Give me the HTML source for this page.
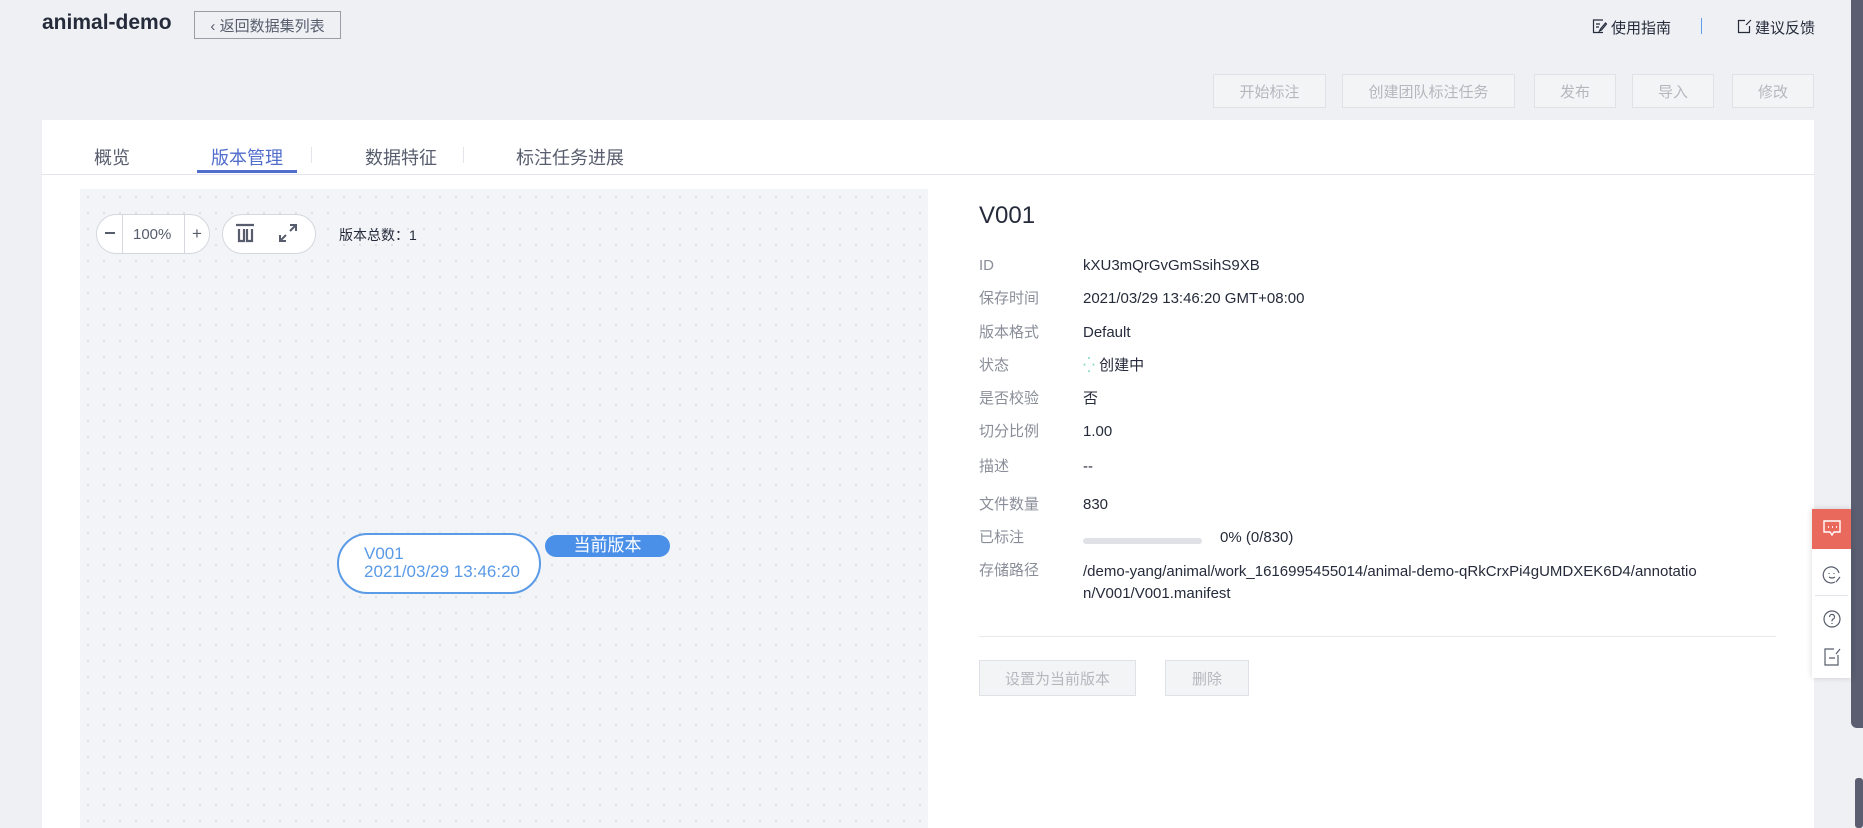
<!DOCTYPE html>
<html><head><meta charset="utf-8"><style>
*{margin:0;padding:0;box-sizing:border-box}
body{width:1863px;height:828px;overflow:hidden;background:#eef0f4;font-family:"Liberation Sans","Noto Sans CJK SC",sans-serif;color:#252b3a;position:relative}
.a{position:absolute;white-space:nowrap}
.btn{position:absolute;height:34px;border:1px solid #dfe1e6;background:#f3f4f6;color:#b4b7be;font-size:15px;display:flex;align-items:center;justify-content:center}
.lab{position:absolute;left:979px;color:#8a8e99;font-size:15px;line-height:20px}
.val{position:absolute;left:1083px;color:#252b3a;font-size:15px;line-height:20px}
</style></head><body>
<div class="a" style="left:42px;top:11px;font-size:21px;font-weight:bold;color:#252b3a">animal-demo</div>
<div class="a" style="left:194px;top:11px;width:147px;height:28px;border:1px solid #9a9da5;font-size:15px;color:#575d6c;display:flex;align-items:center;justify-content:center">‹ 返回数据集列表</div>
<svg class="a" style="left:1592px;top:19px" width="15" height="15" viewBox="0 0 15 15" fill="none" stroke="#252b3a" stroke-width="1.2"><path d="M11 1H1.5v12.5H11M4 5h4M4 8h3M13.5 4l-5 6-1 2 2-1 5-6z"/></svg>
<div class="a" style="left:1611px;top:17px;font-size:15px;color:#252b3a">使用指南</div>
<div class="a" style="left:1701px;top:18px;width:1px;height:16px;background:#5e9cf0"></div>
<svg class="a" style="left:1737px;top:19px" width="15" height="15" viewBox="0 0 15 15" fill="none" stroke="#252b3a" stroke-width="1.2"><path d="M8 1.5H1.5v12h11V7M9 6l5-5"/></svg>
<div class="a" style="left:1755px;top:17px;font-size:15px;color:#252b3a">建议反馈</div>
<div class="btn" style="left:1213px;top:74px;width:113px">开始标注</div>
<div class="btn" style="left:1342px;top:74px;width:173px">创建团队标注任务</div>
<div class="btn" style="left:1534px;top:74px;width:82px">发布</div>
<div class="btn" style="left:1632px;top:74px;width:82px">导入</div>
<div class="btn" style="left:1732px;top:74px;width:82px">修改</div>
<div class="a" style="left:1851px;top:0;width:12px;height:728px;background:#5a5e70;border-radius:0 0 0 6px"></div>
<div class="a" style="left:42px;top:120px;width:1772px;height:708px;background:#fff"></div>
<div class="a" style="left:42px;top:174px;width:1772px;height:1px;background:#e3e5ea"></div>
<div class="a" style="left:94px;top:144px;font-size:18px;color:#575d6c">概览</div>
<div class="a" style="left:211px;top:144px;font-size:18px;color:#526ecc">版本管理</div>
<div class="a" style="left:197px;top:170px;width:100px;height:3px;background:#526ecc"></div>
<div class="a" style="left:311px;top:147px;width:1px;height:16px;background:#e3e5ea"></div>
<div class="a" style="left:365px;top:144px;font-size:18px;color:#575d6c">数据特征</div>
<div class="a" style="left:463px;top:147px;width:1px;height:16px;background:#e3e5ea"></div>
<div class="a" style="left:516px;top:144px;font-size:18px;color:#575d6c">标注任务进展</div>
<div class="a" style="left:80px;top:189px;width:848px;height:639px;background-color:#f3f4f8;background-image:radial-gradient(#dcdee5 1px,transparent 1.2px);background-size:16px 16px"></div>
<div class="a" style="left:96px;top:214px;width:114px;height:40px;border:1px solid #d4d7de;border-radius:20px;background:#fff;font-size:15px;color:#575d6c"><span class="a" style="left:8px;top:17px;width:10px;height:2px;background:#575d6c"></span><span class="a" style="left:25px;top:0;width:1px;height:38px;background:#d4d7de"></span><span class="a" style="left:36px;top:11px">100%</span><span class="a" style="left:87px;top:0;width:1px;height:38px;background:#d4d7de"></span><span class="a" style="left:95px;top:9px;font-size:17px">+</span></div>
<div class="a" style="left:222px;top:214px;width:94px;height:40px;border:1px solid #d4d7de;border-radius:20px;background:#fff"></div>
<svg class="a" style="left:235px;top:223px" width="20" height="20" viewBox="0 0 20 20" fill="none" stroke="#575d6c" stroke-width="2.2"><path d="M1 2h18M4 6v12h5V6M12 6v12h5V6"/></svg>
<svg class="a" style="left:277px;top:222px" width="22" height="22" viewBox="0 0 22 22" fill="none" stroke="#575d6c" stroke-width="2"><path d="M13 3h6v6M19 3l-6 6M3 13v6h6M3 19l6-6"/></svg>
<div class="a" style="left:339px;top:225px;font-size:14px;color:#252b3a">版本总数：1</div>
<div class="a" style="left:337px;top:533px;width:204px;height:61px;border:2.5px solid #5a9ae6;border-radius:31px;background:#fff;color:#5a9ae6;font-size:17px;line-height:18px;padding:10px 0 0 25px">V001<br>2021/03/29 13:46:20</div>
<div class="a" style="left:545px;top:535px;width:125px;height:22px;border-radius:11px;background:#4a8fe8;color:#fff;font-size:17px;text-align:center;line-height:22px">当前版本</div>
<div class="a" style="left:979px;top:202px;font-size:24px;color:#252b3a">V001</div>
<div class="lab" style="top:256px">ID</div><div class="val" style="top:256px">kXU3mQrGvGmSsihS9XB</div>
<div class="lab" style="top:289px">保存时间</div><div class="val" style="top:289px">2021/03/29 13:46:20 GMT+08:00</div>
<div class="lab" style="top:323px">版本格式</div><div class="val" style="top:323px">Default</div>
<div class="lab" style="top:356px">状态</div><div class="val" style="top:356px"><span style="color:#7fd6c6">⁛</span> 创建中</div>
<div class="lab" style="top:389px">是否校验</div><div class="val" style="top:389px">否</div>
<div class="lab" style="top:422px">切分比例</div><div class="val" style="top:422px">1.00</div>
<div class="lab" style="top:457px">描述</div><div class="val" style="top:457px">--</div>
<div class="lab" style="top:495px">文件数量</div><div class="val" style="top:495px">830</div>
<div class="lab" style="top:528px">已标注</div>
<div class="a" style="left:1083px;top:538px;width:119px;height:6px;border-radius:3px;background:#dfe1e6"></div>
<div class="val" style="left:1220px;top:528px">0% (0/830)</div>
<div class="lab" style="top:561px">存储路径</div><div class="val" style="top:561px;line-height:22px">/demo-yang/animal/work_1616995455014/animal-demo-qRkCrxPi4gUMDXEK6D4/annotatio<br>n/V001/V001.manifest</div>
<div class="a" style="left:979px;top:636px;width:797px;height:1px;background:#e8e9ed"></div>
<div class="btn" style="left:979px;top:660px;width:157px;height:36px">设置为当前版本</div>
<div class="btn" style="left:1165px;top:660px;width:84px;height:36px">删除</div>
<div class="a" style="left:1812px;top:509px;width:39px;height:169px;background:#fff;box-shadow:0 0 6px rgba(0,0,0,.15)"></div>
<div class="a" style="left:1812px;top:509px;width:39px;height:40px;background:#e9695c"></div>
<svg class="a" style="left:1822px;top:519px" width="20" height="18" viewBox="0 0 20 18" fill="none" stroke="#fff" stroke-width="1.4"><path d="M2 2h16v11h-6l-2 3-2-3H2z"/><path d="M6 8h1M10 8h1M14 8h1" stroke-width="1.8"/></svg>
<svg class="a" style="left:1822px;top:565px" width="20" height="20" viewBox="0 0 20 20" fill="none" stroke="#575d6c" stroke-width="1.2"><path d="M17 8A8 8 0 1 0 13 17M7 8v1M12 8v1M7 12q3 2 6 0M14 17l4-5"/></svg>
<div class="a" style="left:1815px;top:595px;width:33px;height:1px;background:#e3e5ea"></div>
<svg class="a" style="left:1822px;top:609px" width="20" height="20" viewBox="0 0 20 20" fill="none" stroke="#575d6c" stroke-width="1.2"><circle cx="10" cy="10" r="8"/><path d="M7.5 8a2.5 2.5 0 1 1 3.5 2.2c-1 .5-1 1-1 2M10 14v1"/></svg>
<svg class="a" style="left:1822px;top:647px" width="20" height="20" viewBox="0 0 20 20" fill="none" stroke="#575d6c" stroke-width="1.2"><path d="M12 2H3v16h13V8M7 11h6M14 7l4-5"/></svg>
<div class="a" style="left:1855px;top:778px;width:8px;height:50px;background:#5a5e70;border-radius:3px"></div>
</body></html>
